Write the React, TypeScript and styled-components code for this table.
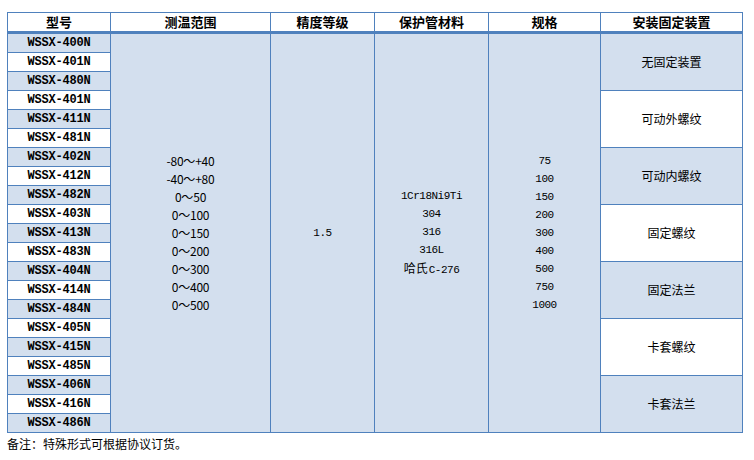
import React from "react";
import styled, { createGlobalStyle } from "styled-components";

const GlobalStyle = createGlobalStyle`
  body {
    margin: 0;
    background: #fff;
    font-family: "Noto Sans CJK SC", "Noto Sans", sans-serif;
    color: #000;
  }
`;

const border = "#4f81bd";
const tint = "#d3dfee";

const models = [
  "WSSX-400N", "WSSX-401N", "WSSX-480N",
  "WSSX-401N", "WSSX-411N", "WSSX-481N",
  "WSSX-402N", "WSSX-412N", "WSSX-482N",
  "WSSX-403N", "WSSX-413N", "WSSX-483N",
  "WSSX-404N", "WSSX-414N", "WSSX-484N",
  "WSSX-405N", "WSSX-415N", "WSSX-485N",
  "WSSX-406N", "WSSX-416N", "WSSX-486N",
];

const ranges = ["-80～+40", "-40～+80", "0～50", "0～100", "0～150", "0～200", "0～300", "0～400", "0～500"];
const materials = ["1Cr18Ni9Ti", "304", "316", "316L"];
const sizes = ["75", "100", "150", "200", "300", "400", "500", "750", "1000"];
const mounts = ["无固定装置", "可动外螺纹", "可动内螺纹", "固定螺纹", "固定法兰", "卡套螺纹", "卡套法兰"];

const Page = styled.div`
  padding: 12px 0 0 7px;
`;

const Table = styled.table`
  border-collapse: collapse;
  table-layout: fixed;
  width: 735px;
`;

const Head = styled.th`
  height: 18px;
  padding: 0;
  border: 1px solid ${border};
  border-bottom: 3px solid ${border};
  background: #fff;
  font-size: 13px;
  line-height: 18px;
  font-weight: bold;
  text-align: center;
`;

const Model = styled.td<{ $tinted: boolean }>`
  height: 18px;
  padding: 0;
  border: 1px solid ${border};
  background: ${(p) => (p.$tinted ? tint : "#fff")};
  font-family: "Liberation Mono", monospace;
  font-weight: bold;
  font-size: 12px;
  letter-spacing: -0.2px;
  line-height: 18px;
  text-align: center;
`;

const Span = styled.td<{ $mono?: boolean }>`
  padding: 0;
  border: 1px solid ${border};
  background: ${tint};
  vertical-align: middle;
  text-align: center;
  font-family: ${(p) =>
    p.$mono ? `"Liberation Mono", "Noto Sans CJK SC", monospace` : `"Noto Sans CJK SC", sans-serif`};
  font-size: ${(p) => (p.$mono ? "11px" : "12px")};
  letter-spacing: ${(p) => (p.$mono ? "-0.5px" : "-0.2px")};
  line-height: 18px;
`;

const Line = styled.div``;

const CjkPart = styled.span`
  font-family: "Noto Sans CJK SC", sans-serif;
  font-size: 12px;
  letter-spacing: 0;
  margin-right: 1px;
`;

const Mount = styled.td<{ $tinted: boolean }>`
  padding: 0;
  border: 1px solid ${border};
  background: ${(p) => (p.$tinted ? tint : "#fff")};
  vertical-align: middle;
  text-align: center;
  font-size: 12px;
  line-height: 18px;
`;

const Note = styled.div`
  font-size: 12px;
  line-height: 18px;
  margin-top: 2px;
`;

export default function App() {
  return (
    <Page>
      <GlobalStyle />
      <Table>
        <colgroup>
          <col style={{ width: 103 }} />
          <col style={{ width: 160 }} />
          <col style={{ width: 104 }} />
          <col style={{ width: 114 }} />
          <col style={{ width: 112 }} />
          <col style={{ width: 142 }} />
        </colgroup>
        <thead>
          <tr>
            <Head>型号</Head>
            <Head>测温范围</Head>
            <Head>精度等级</Head>
            <Head>保护管材料</Head>
            <Head>规格</Head>
            <Head>安装固定装置</Head>
          </tr>
        </thead>
        <tbody>
          {models.map((m, i) => (
            <tr key={i}>
              <Model $tinted={i % 2 === 0}>{m}</Model>
              {i === 0 && (
                <>
                  <Span rowSpan={21}>
                    {ranges.map((r) => (
                      <Line key={r}>{r}</Line>
                    ))}
                  </Span>
                  <Span rowSpan={21} $mono>
                    1.5
                  </Span>
                  <Span rowSpan={21} $mono>
                    {materials.map((r) => (
                      <Line key={r}>{r}</Line>
                    ))}
                    <Line>
                      <CjkPart>哈氏</CjkPart>C-276
                    </Line>
                  </Span>
                  <Span rowSpan={21} $mono>
                    {sizes.map((r) => (
                      <Line key={r}>{r}</Line>
                    ))}
                  </Span>
                </>
              )}
              {i % 3 === 0 && (
                <Mount rowSpan={3} $tinted={(i / 3) % 2 === 0}>
                  {mounts[i / 3]}
                </Mount>
              )}
            </tr>
          ))}
        </tbody>
      </Table>
      <Note>备注：特殊形式可根据协议订货。</Note>
    </Page>
  );
}
